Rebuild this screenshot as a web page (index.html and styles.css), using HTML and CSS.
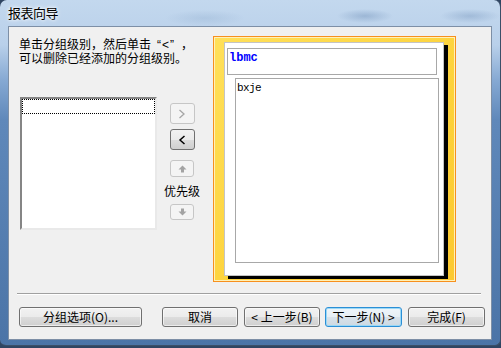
FILE: index.html
```html
<!DOCTYPE html>
<html lang="zh-CN">
<head>
    <meta charset="UTF-8">
    <meta name="viewport" content="width=device-width, initial-scale=1.0">
    <title>报表向导</title>
    <link rel="stylesheet" href="styles.css">
</head>
<body>

    <div class="window">
        <div class="titlebar"><span class="title">报表向导</span></div>

        <div class="client">
            <div class="main">
                <div class="left">
                    <p class="hint">单击分组级别，然后单击<span class="quote">“&lt;”</span>，<br>可以删除已经添加的分组级别。</p>

                    <div class="picker">
                        <div class="listbox"><div class="focus-row"></div></div>

                        <div class="controls">
                            <button type="button" class="btn-arrow disabled">
                                <svg width="8" height="10" viewBox="0 0 8 10"><polyline points="1.5,1 6,5 1.5,9" fill="none" stroke="#a6a6a6" stroke-width="1.3"/></svg>
                            </button>
                            <button type="button" class="btn-arrow">
                                <svg width="8" height="10" viewBox="0 0 8 10"><polyline points="6.5,1 2,5 6.5,9" fill="none" stroke="#000" stroke-width="1.5"/></svg>
                            </button>
                            <button type="button" class="btn-move up disabled">
                                <svg width="9" height="8" viewBox="0 0 9 8"><polygon points="4.5,0.5 8.5,4.5 6,4.5 6,7.5 3,7.5 3,4.5 0.5,4.5" fill="#a3a3a3"/></svg>
                            </button>
                            <span class="priority">优先级</span>
                            <button type="button" class="btn-move down disabled">
                                <svg width="9" height="8" viewBox="0 0 9 8"><polygon points="4.5,7.5 8.5,3.5 6,3.5 6,0.5 3,0.5 3,3.5 0.5,3.5" fill="#a3a3a3"/></svg>
                            </button>
                        </div>
                    </div>
                </div>

                <div class="preview">
                    <div class="page">
                        <div class="group-head">lbmc</div>
                        <div class="group-body">bxje</div>
                    </div>
                </div>
            </div>

            <div class="separator"></div>

            <div class="actions">
                <button type="button" class="btn wide">分组选项(O)...</button>
                <button type="button" class="btn cancel">取消</button>
                <button type="button" class="btn prev">&lt; 上一步(B)</button>
                <button type="button" class="btn next default">下一步(N) &gt;</button>
                <button type="button" class="btn finish">完成(F)</button>
            </div>
        </div>
    </div>

</body>
</html>
```

FILE: styles.css
```css
body {
    margin: 0;
    background-color: #2f4562;
    font-family: "Noto Sans CJK SC", sans-serif;
    font-size: 12px;
    color: #000;
}

.window {
    box-sizing: border-box;
    width: 501px;
    height: 346px;
    border-radius: 7px 7px 6px 6px;
    border-right: 1px solid #3b4f68;
    border-bottom: 1px solid #3b4f68;
    overflow: hidden;
    background: linear-gradient(to bottom, #c3d8ee 0, #b9d0ea 45px, #86a9d3 80px, #5f88ba 120px, #4b74a7 100%);
}

.titlebar {
    box-sizing: border-box;
    height: 26px;
    padding: 4px 0 0 8px;
    background:
        radial-gradient(ellipse 28px 7px at 365px 16px, rgba(90, 125, 170, 0.35), transparent),
        radial-gradient(ellipse 30px 7px at 470px 16px, rgba(90, 125, 170, 0.3), transparent),
        radial-gradient(ellipse 40px 8px at 205px 18px, rgba(110, 145, 185, 0.2), transparent);
}

.title {
    font-size: 13px;
    line-height: 14px;
    letter-spacing: -0.5px;
    text-shadow: 0 0 5px #fff, 0 0 3px #fff;
}

.client {
    box-sizing: border-box;
    width: 484px;
    height: 314px;
    margin-left: 8px;
    border: 1px solid #7d8fa6;
    background-color: #f0f0f0;
}

.main {
    display: flex;
    padding-top: 9px;
}

.left {
    width: 204px;
}

.hint {
    margin: 2px 0 0 10px;
    font-family: "Liberation Sans", "Noto Sans CJK SC", sans-serif;
    line-height: 14px;
    white-space: nowrap;
}

.quote {
    padding: 0 6px;
    letter-spacing: 1px;
}

.picker {
    display: flex;
    margin: 31px 0 0 11px;
}

.listbox {
    box-sizing: border-box;
    width: 137px;
    height: 133px;
    background-color: #fff;
    border: 2px solid;
    border-color: #858585 #e9e9e9 #e9e9e9 #858585;
}

.focus-row {
    box-sizing: border-box;
    height: 15px;
    border: 1px dotted #000;
}

.controls {
    width: 40px;
    margin-left: 5px;
    padding-top: 6px;
    display: flex;
    flex-direction: column;
    align-items: center;
}

.controls button {
    box-sizing: border-box;
    padding: 0;
    display: flex;
    align-items: center;
    justify-content: center;
    border-radius: 3px;
    border: 1px solid #707070;
    background: linear-gradient(#f2f2f2, #ebebeb 50%, #dddddd 50%, #cfcfcf);
}

.controls button.disabled {
    border-color: #c6c6c6;
    background: #f4f4f4;
}

.btn-arrow {
    width: 25px;
    height: 21px;
}

.btn-arrow + .btn-arrow {
    margin-top: 5px;
}

.btn-move {
    width: 24px;
}

.btn-move.up {
    height: 17px;
    margin-top: 10px;
}

.btn-move.down {
    height: 16px;
    margin-top: 7px;
}

.priority {
    margin-top: 7px;
    line-height: 13px;
    white-space: nowrap;
}

.preview {
    box-sizing: border-box;
    width: 243px;
    height: 246px;
    padding: 5px 0 0 10px;
    border: 1px solid #f7901e;
    background: linear-gradient(135deg, #ffe05a, #fdd23a 60%, #fcc930);
    box-shadow: inset 0 0 0 1px #fff1b8;
}

.page {
    box-sizing: border-box;
    width: 220px;
    height: 234px;
    padding: 5px 0 0 2px;
    background-color: #fff;
    border: 1px solid #c4c4c4;
    box-shadow: 4px 3px 0 #000;
}

.group-head {
    box-sizing: border-box;
    width: 210px;
    height: 27px;
    padding: 2px 0 0 1px;
    border: 1px solid #a8a8a8;
    font: bold 12px/14px "Liberation Mono", monospace;
    color: #0000ff;
}

.group-body {
    box-sizing: border-box;
    width: 204px;
    height: 185px;
    margin: 3px 0 0 8px;
    padding: 3px 0 0 1px;
    border: 1px solid #a8a8a8;
    font: 11px/13px "Liberation Mono", monospace;
    letter-spacing: -0.6px;
}

.separator {
    width: 464px;
    height: 1px;
    margin: 11px 0 0 8px;
    background-color: #a0a0a0;
    border-bottom: 1px solid #fff;
}

.actions {
    display: flex;
    margin: 12px 0 0 10px;
}

.btn {
    box-sizing: border-box;
    height: 20px;
    width: 76px;
    padding: 0;
    font-family: inherit;
    font-size: 12px;
    line-height: 16px;
    color: #000;
    border: 1px solid #707070;
    border-radius: 3px;
    background: linear-gradient(#f2f2f2, #ebebeb 50%, #dddddd 50%, #cfcfcf);
    box-shadow: inset 0 0 0 1px rgba(255, 255, 255, 0.6);
    white-space: nowrap;
}

.btn.wide {
    width: 123px;
}

.btn.cancel {
    margin-left: 20px;
}

.btn.prev {
    margin-left: 6px;
}

.btn.next {
    width: 77px;
    margin-left: 5px;
}

.btn.finish {
    width: 77px;
    margin-left: 6px;
}

.btn.default {
    border-color: #2b8fd6;
    background: linear-gradient(#eef5fa, #e6eef4 50%, #d8e2ea 50%, #cdd9e2);
    box-shadow: inset 0 0 0 1px #9ad8f6;
}
```
